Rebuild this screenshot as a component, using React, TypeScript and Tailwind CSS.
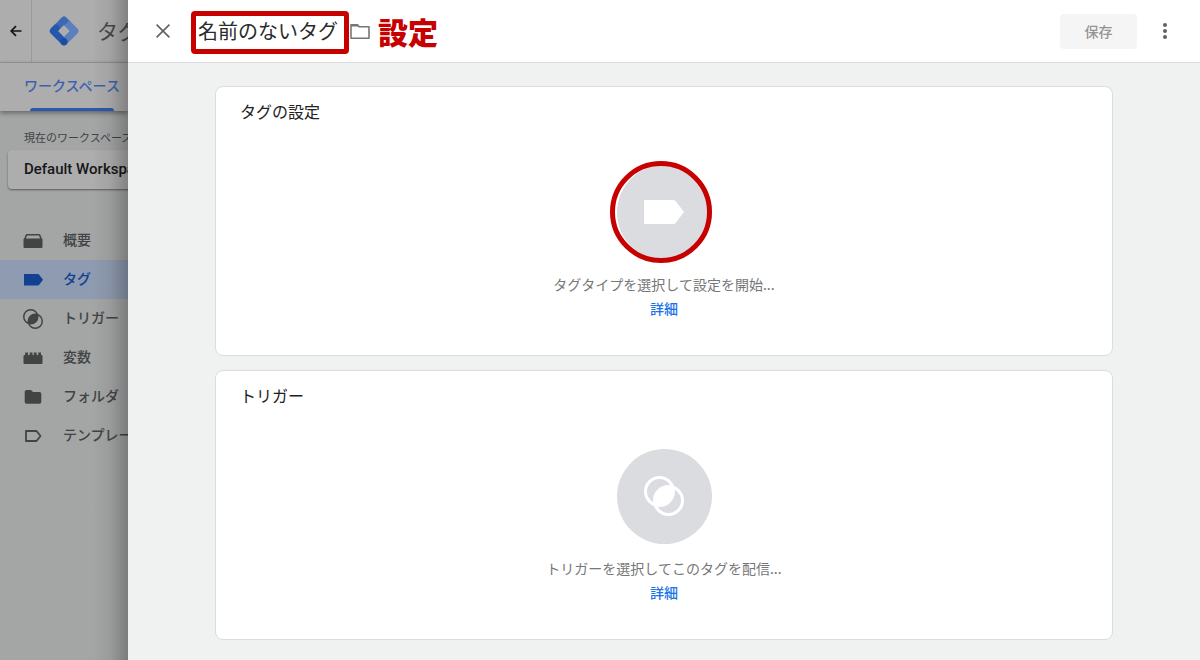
import type { ReactNode } from "react";

function TriggerIcon({ className }: { className?: string }) {
  return (
    <svg viewBox="0 0 40 40" className={className} fill="none" stroke="currentColor" strokeWidth="3">
      <circle cx="15.5" cy="15.5" r="14" />
      <circle cx="24.5" cy="24.5" r="14" />
      <path d="M11.3 29.2A14 14 0 0 1 29.2 11.3A14 14 0 0 1 11.3 29.2Z" fill="currentColor" stroke="none" />
    </svg>
  );
}

function TagIcon({ className }: { className?: string }) {
  return (
    <svg viewBox="0 0 40 24" className={className} fill="currentColor">
      <path d="M0 0H29Q31 0 32 1.500L40 12L32 22.500Q31 24 29 24H0Z" />
    </svg>
  );
}

const navItems: { label: string; icon: ReactNode; active?: boolean }[] = [
  {
    label: "概要",
    icon: (
      <svg viewBox="0 0 20 16" className="w-5" fill="currentColor">
        <path d="M4 1H16Q17 1 17.400 2L19 6V7.500H17.800L16 2.500H4L2.200 7.500H1V6L2.600 2Q3 1 4 1Z" />
        <path d="M1.500 5.500H18.500Q19.500 5.500 19.500 6.500V14Q19.500 15 18.500 15H1.500Q.5 15 .5 14V6.500Q.5 5.500 1.500 5.500Z" />
      </svg>
    ),
  },
  { label: "タグ", icon: <TagIcon className="w-[19px]" />, active: true },
  { label: "トリガー", icon: <TriggerIcon className="w-5" /> },
  {
    label: "変数",
    icon: (
      <svg viewBox="0 0 20 14" className="w-5" fill="currentColor">
        <path d="M.5 5Q.5 4 1.500 4H2.200V1.500H5V4H6.700V1.500H9.500V4H10.800V1.500H13.600V4H15.200V1.500H18V4H18.500Q19.500 4 19.500 5V12Q19.500 13 18.500 13H1.500Q.5 13 .5 12Z" />
      </svg>
    ),
  },
  {
    label: "フォルダ",
    icon: (
      <svg viewBox="0 0 20 16" className="w-5" fill="currentColor">
        <path d="M3.500 1H8L10 3H16.500Q18.300 3 18.300 4.800V13Q18.300 14.800 16.500 14.800H3.500Q1.700 14.800 1.700 13V2.800Q1.700 1 3.500 1Z" />
      </svg>
    ),
  },
  {
    label: "テンプレート",
    icon: (
      <svg viewBox="0 0 20 14" className="w-5" fill="none" stroke="currentColor" strokeWidth="1.800" strokeLinejoin="round">
        <path d="M3 2H13.500L17.500 7L13.500 12H3Z" />
      </svg>
    ),
  },
];

function Sidebar() {
  return (
    <aside className="relative w-32 shrink-0 overflow-hidden whitespace-nowrap bg-[#a4a5a5]">
      <div className="flex h-[63px] items-center border-b border-[#979797] bg-[#adadad]">
        <button aria-label="戻る" className="flex h-full w-8 shrink-0 items-center justify-center border-r border-[#9a9a9a] text-[#151515]">
          <svg viewBox="0 0 12 12" className="w-3" fill="none" stroke="currentColor" strokeWidth="1.700">
            <path d="M11.500 6H1.500M6 1.200L1.200 6L6 10.800" />
          </svg>
        </button>
        <svg viewBox="0 0 30 30" className="ml-[17px] w-[30px] shrink-0" fill="none" strokeWidth="6.800" strokeLinejoin="round">
          <path d="M12 7L15 4.200L25.800 15L15 25.800" stroke="#5b80bd" />
          <path d="M19.500 8.700L15 4.200L4.200 15" stroke="#3d68b5" />
          <path d="M17.800 7L25.800 15L17.800 23" stroke="#5b80bd" />
          <path d="M7 12.200L4.200 15L15 25.800" stroke="#2458ac" strokeLinecap="round" />
          <circle cx="15" cy="25.800" r="3.500" fill="#1c4ea0" />
        </svg>
        <span className="ml-[18px] text-[21px] text-[#474849]">タグ マネージャー</span>
      </div>

      <div className="relative h-12 bg-[#adadad] pl-6 shadow-[0_2px_5px_rgba(0,0,0,0.4)]">
        <a href="#workspace" className="inline-flex h-full items-center pb-1 text-sm font-medium text-[#3c62ad]">
          ワークスペース
        </a>
        <span className="absolute bottom-0 left-[30px] h-[3px] w-[84px] rounded-t bg-[#2c59ae]" />
      </div>

      <div className="pt-[18px] text-[#414345]">
        <p className="pl-6 text-[11px] leading-4">現在のワークスペース</p>
        <button className="mt-[5px] ml-2 flex h-[39px] w-60 items-center rounded bg-[#adadad] pl-4 font-['Roboto',sans-serif] text-[15px] font-medium text-[#161718] shadow-[0_1px_2px_rgba(0,0,0,0.45)]">
          Default Workspace
        </button>
      </div>

      <nav className="mt-8">
        {navItems.map((item) => (
          <a
            key={item.label}
            href="#nav"
            className={
              item.active
                ? "flex h-[39px] items-center gap-5 bg-[#8f9bb0] pl-[23px] text-sm font-medium text-[#124191]"
                : "flex h-[39px] items-center gap-5 pl-[23px] text-sm font-medium text-[#414345]"
            }
          >
            <span className="flex w-5 justify-center pt-px">{item.icon}</span>
            <span className="pb-[3px]">{item.label}</span>
          </a>
        ))}
      </nav>

      {/* shadow cast by the open panel */}
      <div className="pointer-events-none absolute inset-y-0 right-0 w-9 bg-linear-to-r from-transparent via-black/6 to-black/25" />
    </aside>
  );
}

type CardProps = { title: string; hint: string; icon: ReactNode; highlighted?: boolean };

function SettingCard({ title, hint, icon, highlighted }: CardProps) {
  return (
    <section className="rounded-lg border border-[#dadcde] bg-white px-6 pt-3 pb-[35px]">
      <h2 className="text-base leading-6 text-[#212224]">{title}</h2>
      <div className="mt-[42px] flex flex-col items-center">
        <div className="relative">
          <button aria-label={title} className="flex size-[95px] items-center justify-center rounded-full bg-[#dadce0] pb-[2px] text-white">
            {icon}
          </button>
          {highlighted && (
            <span className="pointer-events-none absolute -top-1 -left-[7px] size-[102px] rounded-full border-[5px] border-[#c70000]" />
          )}
        </div>
        <p className="mt-3 text-sm leading-6 text-[#767778]">{hint}</p>
        <a href="#details" className="text-sm leading-6 font-medium text-[#1a73e8]">
          詳細
        </a>
      </div>
    </section>
  );
}

function App() {
  return (
    <div className="flex min-h-screen font-['Noto_Sans_CJK_JP',sans-serif]">
      <Sidebar />

      <div className="flex min-w-0 flex-1 flex-col bg-[#eff2f1]">
        <header className="flex h-[63px] items-center border-b border-[#d9dbdc] bg-white pr-[27px] pl-7">
          <button aria-label="閉じる" className="text-[#5f6368]">
            <svg viewBox="0 0 14 14" className="w-[14px]" fill="none" stroke="currentColor" strokeWidth="1.600">
              <path d="M.6 .6L13.400 13.400M13.400 .6L.6 13.400" />
            </svg>
          </button>
          <input
            aria-label="タグの名前"
            defaultValue="名前のないタグ"
            className="mt-[2px] ml-[21px] h-[43px] w-[158px] rounded border-[5px] border-[#c70000] bg-white pb-1 pl-[2px] text-xl text-[#2a2b2d] outline-none"
          />
          <button aria-label="フォルダ" className="ml-px text-[#757779]">
            <svg viewBox="0 0 20 17" className="w-5" fill="none" stroke="currentColor" strokeWidth="1.600" strokeLinejoin="round">
              <path d="M1 2.500V15.200H19V3.800H9L7.500 1.800H1Z" />
              <path d="M1 1.500H7.500L9 3.500H1Z" fill="currentColor" stroke="none" />
            </svg>
          </button>
          <strong className="ml-2 text-[30px] leading-10 font-black text-[#c70000]">設定</strong>
          <button disabled className="ml-auto h-[35px] w-[77px] rounded bg-[#f5f5f5] text-sm font-medium text-[#949494]">
            保存
          </button>
          <button aria-label="その他" className="ml-5 text-[#5f6368]">
            <svg viewBox="0 0 16 16" className="w-4" fill="currentColor">
              <circle cx="8" cy="2" r="2" />
              <circle cx="8" cy="8" r="2" />
              <circle cx="8" cy="14" r="2" />
            </svg>
          </button>
        </header>

        <main className="flex flex-col gap-[14px] px-[87px] pt-[23px] pb-5">
          <SettingCard
            title="タグの設定"
            hint="タグタイプを選択して設定を開始..."
            icon={<TagIcon className="w-10" />}
            highlighted
          />
          <SettingCard
            title="トリガー"
            hint="トリガーを選択してこのタグを配信..."
            icon={<TriggerIcon className="w-10" />}
          />
        </main>
      </div>
    </div>
  );
}

export default App;
